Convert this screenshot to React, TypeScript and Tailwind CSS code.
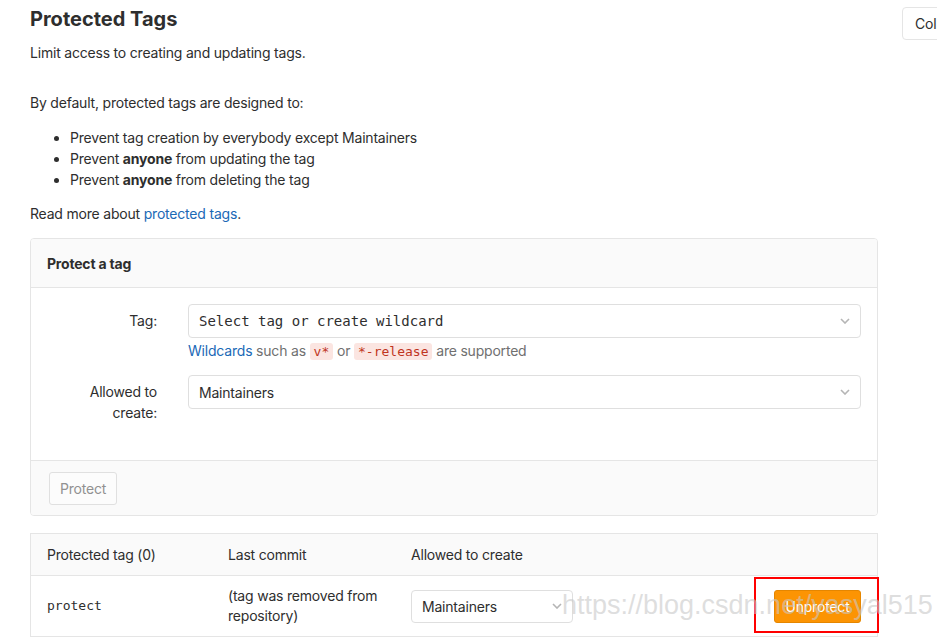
import React from "react";

const Chevron = () => (
  <svg width="10" height="6" viewBox="0 0 10 6" className="shrink-0">
    <polyline points="1,1 5,5 9,1" fill="none" stroke="#b5b5b5" strokeWidth="1.6" />
  </svg>
);

export default function App() {
  return (
    <div
      className="relative w-[937px] h-[639px] overflow-hidden bg-white text-[#2e2e2e] text-[14px] tracking-[-0.2px]"
      style={{ fontFamily: "Inter, 'Noto Sans', sans-serif" }}
    >
      <div className="flex">
        <div className="ml-[30px] w-[848px] shrink-0 pt-[7px]">
          <h4 className="text-[20px] leading-[24px] font-bold tracking-[0px]">Protected Tags</h4>
          <p className="mt-[12px] leading-[20px]">Limit access to creating and updating tags.</p>
          <p className="mt-[30px] leading-[20px]">By default, protected tags are designed to:</p>
          <ul className="mt-[14px] pl-[40px] list-disc leading-[21px]">
            <li>Prevent tag creation by everybody except Maintainers</li>
            <li>
              Prevent <b>anyone</b> from updating the tag
            </li>
            <li>
              Prevent <b>anyone</b> from deleting the tag
            </li>
          </ul>
          <p className="mt-[14px] leading-[20px]">
            Read more about <span className="text-[#1b69b6]">protected tags</span>.
          </p>

          <div className="mt-[14px] border border-[#e5e5e5] rounded-[4px] overflow-hidden">
            <div className="h-[49px] bg-[#fafafa] border-b border-[#e5e5e5] px-[16px] flex items-center font-bold">
              Protect a tag
            </div>
            <div className="px-[16px] pt-[16px] pb-[37px]">
              <div className="flex">
                <div className="w-[110px] text-right pt-[7px] leading-[20px]">Tag:</div>
                <div className="ml-[31px] flex-1">
                  <div className="h-[34px] border border-[#dfdfdf] rounded-[4px] flex items-center justify-between pl-[10px] pr-[10px]">
                    <span style={{ fontFamily: "'DejaVu Sans Mono', monospace" }} className="text-[14px] tracking-[0px]">
                      Select tag or create wildcard
                    </span>
                    <Chevron />
                  </div>
                  <div className="mt-[3px] leading-[20px] text-[#707070]">
                    <span className="text-[#1b69b6]">Wildcards</span> such as{" "}
                    <code
                      className="bg-[#fbe5e1] text-[#c0341d] rounded-[3px] px-[4px] py-[1px] text-[13px] tracking-[0px]"
                      style={{ fontFamily: "'DejaVu Sans Mono', monospace" }}
                    >
                      v*
                    </code>{" "}
                    or{" "}
                    <code
                      className="bg-[#fbe5e1] text-[#c0341d] rounded-[3px] px-[4px] py-[1px] text-[13px] tracking-[0px]"
                      style={{ fontFamily: "'DejaVu Sans Mono', monospace" }}
                    >
                      *-release
                    </code>{" "}
                    are supported
                  </div>
                </div>
              </div>
              <div className="flex mt-[13px]">
                <div className="w-[110px] text-right pt-[6px] leading-[21px]">
                  Allowed to
                  <br />
                  create:
                </div>
                <div className="ml-[31px] flex-1">
                  <div className="h-[34px] border border-[#dfdfdf] rounded-[4px] flex items-center justify-between pl-[10px] pr-[10px]">
                    <span>Maintainers</span>
                    <Chevron />
                  </div>
                </div>
              </div>
            </div>
            <div className="bg-[#fafafa] border-t border-[#e5e5e5] pl-[18px] pt-[11px] pb-[10px]">
              <button className="h-[33px] px-[10px] border border-[#e0e0e0] rounded-[3px] bg-[#fcfcfc] text-[#919191]">
                Protect
              </button>
            </div>
          </div>

          <div className="mt-[17px] border border-[#e5e5e5] border-b-0">
            <div className="h-[42px] bg-[#fafafa] border-b border-[#e5e5e5] flex items-center">
              <div className="w-[181px] pl-[16px]">Protected tag (0)</div>
              <div className="w-[183px] pl-[16px]">Last commit</div>
              <div className="pl-[16px]">Allowed to create</div>
            </div>
            <div className="flex items-center py-[10px] border-b border-[#e5e5e5]">
              <div
                className="w-[181px] pl-[16px] text-[13px] tracking-[0px]"
                style={{ fontFamily: "'DejaVu Sans Mono', monospace" }}
              >
                protect
              </div>
              <div className="w-[183px] pl-[16px] pr-[8px] leading-[20px]">
                (tag was removed from repository)
              </div>
              <div className="pl-[16px]">
                <div className="w-[162px] h-[33px] border border-[#dfdfdf] rounded-[4px] flex items-center justify-between pl-[10px] pr-[10px]">
                  <span>Maintainers</span>
                  <Chevron />
                </div>
              </div>
              <div className="flex-1 flex justify-end pr-[16px]">
                <button className="w-[87px] h-[33px] rounded-[3px] bg-[#fc9403] border border-[#e58600] text-white">
                  Unprotect
                </button>
              </div>
            </div>
          </div>
        </div>
        <div className="ml-[24px] mt-[7px] shrink-0">
          <button className="h-[33px] px-[12px] border border-[#e5e5e5] rounded-[4px] bg-white whitespace-nowrap">
            Collapse
          </button>
        </div>
      </div>

      <div className="absolute left-[754px] top-[577px] w-[125px] h-[56px] border-2 border-[#ff0000]" />
      <div
        className="absolute left-[562px] top-[589px] text-[27px] leading-[32px] whitespace-nowrap tracking-[0px] text-[rgba(200,200,200,0.6)]"
        style={{ fontFamily: "'Liberation Sans', Arial, sans-serif" }}
      >
        https://blog.csdn.net/yasyal515
      </div>
    </div>
  );
}
